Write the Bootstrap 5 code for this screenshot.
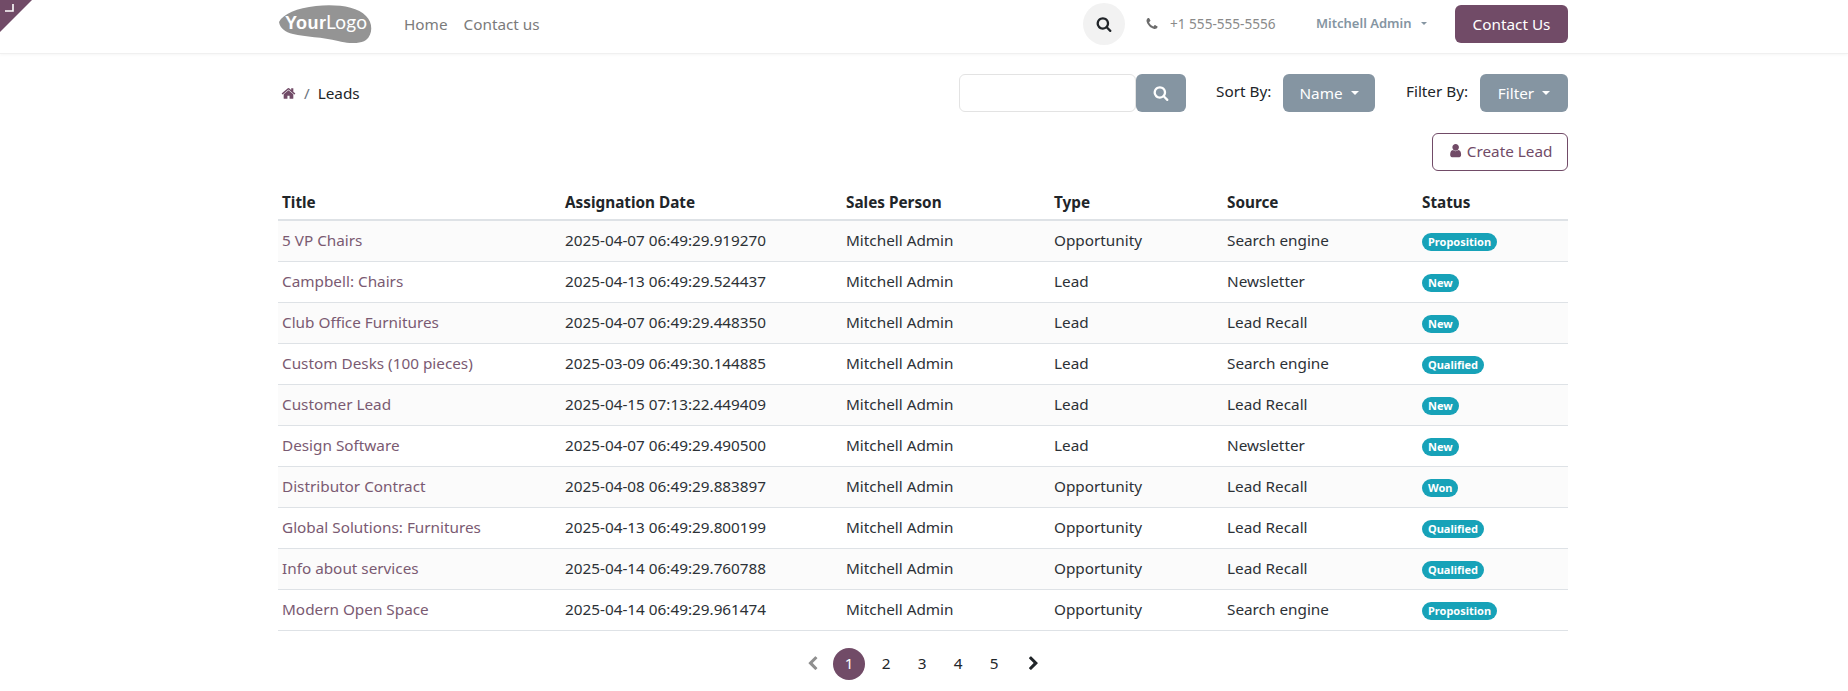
<!DOCTYPE html>
<html lang="en">
<head>
<meta charset="utf-8">
<title>Leads</title>
<link href="https://cdn.jsdelivr.net/npm/bootstrap@5.3.0/dist/css/bootstrap.min.css" rel="stylesheet">
<style>
body{font-family:"Noto Sans","Liberation Sans",sans-serif;font-size:15.3px;color:#212529;background:#fff;overflow:hidden}
.page-wrap{width:1290px;margin-left:278px}
.ic{width:1em;height:1em;fill:currentColor;display:inline-block;vertical-align:-.125em}
.corner-ribbon{position:absolute;left:0;top:0;width:32px;height:32px}
.site-head{height:54px;padding:0 0 5px;border-bottom:1px solid #f0f0f0;box-shadow:0 1px 3px rgba(0,0,0,.04)}
.logo-svg{width:95px;height:40px;display:block;margin-top:-2px}
.head-links{gap:0;margin-left:31px}
.head-links .nav-link{padding:0;color:#7b7b7b;font-size:15.3px;margin-right:16px}
.round-search{width:42px;height:42px;border-radius:50%;background:#f2f2f2;color:#212529;font-size:16px;margin-right:20px}
.head-phone{color:#8a8a8a;font-size:13.6px;width:171px;white-space:nowrap}
.head-phone .ic{color:#6c6c6c;margin-right:11px;font-size:14px}
.head-user{color:#8595a2;font-size:13px;font-weight:600;width:139px;padding:0;white-space:nowrap}
.head-user.dropdown-toggle::after{margin-left:9px}
.btn-contact{background:#714b67;color:#fff;border:0;width:113px;height:38px;font-size:15.3px;padding:0;border-radius:6px}
.btn-contact:hover{background:#714b67;color:#fff}
.tools-row{height:38px;margin-top:20px}
.crumb-list{margin:0 0 0 3px;font-size:15.3px;--bs-breadcrumb-divider-color:#6c757d}
.crumb-list .ic{color:#714b67;font-size:15px;vertical-align:-2px}
.input-group>.search-input{width:177px;height:38px;flex:none;border:1px solid #e3e3e3;border-radius:6px!important}
.btn-slate{background:#8595a2;color:#fff;border:0;height:38px;font-size:15.3px;padding:0;border-radius:6px}
.btn-slate:hover{background:#8595a2;color:#fff}
.btn-slate.dropdown-toggle::after{margin-left:8px}
.input-group>.btn-find{width:50px;margin-left:0!important;font-size:16px;border-radius:6px!important}
.btn-name{width:92px}
.btn-filter{width:88px}
.sort-label{width:67px;margin:0 0 4px 30px;white-space:nowrap}
.filter-label{width:74px;margin:0 0 4px 31px;white-space:nowrap}
.create-row{margin-top:21px}
.btn-create{border:1px solid #714b67;color:#714b67;background:#fff;width:136px;height:38px;padding:0 0 2px;font-size:15.3px;border-radius:6px}
.btn-create:hover{color:#714b67;background:#fff}
.lead-table{table-layout:fixed;width:1290px;margin:10px 0 0;--bs-table-striped-bg:#fbfbfb;--bs-table-border-color:#dee2e6;--bs-table-color:#2c3136;--bs-table-striped-color:#2c3136}
.lead-table th{font-weight:700;height:39px;padding:4px 4px 0;vertical-align:middle;border-bottom:2px solid #dee2e6;white-space:nowrap;color:#212529}
.lead-table td{height:41px;padding:0 4px;vertical-align:middle;white-space:nowrap}
.lead-table a{color:#7a5a72;text-decoration:none}
.lead-table thead tr{height:39px}
.w-a{width:283px}.w-b{width:281px}.w-c{width:208px}.w-d{width:173px}.w-e{width:195px}.w-f{width:150px}
.stat-pill{background:#17a2b8;color:#fff;font-size:11px;font-weight:700;padding:2px 6px;border-radius:9px;display:inline-block;line-height:14px;vertical-align:middle}
.pager{margin:17px 0 0 1px;gap:5px;align-items:center;--bs-pagination-border-width:0}
.pager .page-link{width:32px;height:32px;padding:0;border-radius:50%!important;display:flex;align-items:center;justify-content:center;color:#212529;background:transparent;font-size:15.3px}
.pager .active{margin-right:1px}
.pager .active .page-link{background:#714b67;color:#fff}
.pager .disabled .page-link{color:#8f8f8f;background:transparent}
.pager .pg-next{margin-left:4px}
</style>
</head>
<body>
<svg width="0" height="0" class="d-none" aria-hidden="true">
<symbol id="i-search" viewBox="0 0 1792 1792"><path d="M1216 832q0-185-131.5-316.5t-316.5-131.5-316.5 131.5-131.5 316.5 131.5 316.5 316.5 131.5 316.5-131.5 131.5-316.5zm512 832q0 52-38 90t-90 38q-54 0-90-38l-343-342q-179 124-399 124-143 0-273.5-55.5t-225-150-150-225-55.5-273.5 55.5-273.5 150-225 225-150 273.5-55.5 273.5 55.5 225 150 150 225 55.5 273.5q0 220-124 399l343 343q37 37 37 90z"/></symbol>
<symbol id="i-home" viewBox="0 0 1792 1792"><path d="M1472 992v480q0 26-19 45t-45 19h-384v-384h-256v384h-384q-26 0-45-19t-19-45v-480q0-1 .5-3t.5-3l575-474 575 474q1 2 1 6zm223-69l-62 74q-8 9-21 11h-3q-13 0-21-7l-692-577-692 577q-12 8-24 7-13-2-21-11l-62-74q-8-10-7-23.5t11-21.5l719-599q32-26 76-26t76 26l244 204v-195q0-14 9-23t23-9h192q14 0 23 9t9 23v408l219 182q10 8 11 21.5t-7 23.5z"/></symbol>
<symbol id="i-phone" viewBox="0 0 1792 1792"><path d="M1600 1240q0 27-10 70.5t-21 68.5q-21 50-122 106-94 51-186 51-27 0-53-3.5t-57.5-12.5-47-14.5-55.5-20.5-49-18q-98-35-175-83-127-79-264-216t-216-264q-48-77-83-175-3-9-18-49t-20.5-55.5-14.5-47-12.5-57.5-3.5-53q0-92 51-186 56-101 106-122 25-11 68.5-21t70.5-10q14 0 21 3 18 6 53 76 11 19 30 54t35 63.5 31 53.5q3 4 17.5 25t21.5 35.5 7 28.5q0 20-28.5 50t-62 55-62 53-28.5 46q0 9 5 22.5t8.5 20.5 14 24 11.5 19q76 137 174 235t235 174q2 1 19 11.5t24 14 20.5 8.5 22.5 5q18 0 46-28.5t53-62 55-62 50-28.5q14 0 28.5 7t35.5 21.5 25 17.5q25 15 53.5 31t63.5 35 54 30q70 35 76 53 3 7 3 21z"/></symbol>
<symbol id="i-user" viewBox="0 0 1792 1792"><path d="M1536 1399q0 109-62.5 187t-150.5 78h-854q-88 0-150.5-78t-62.5-187q0-85 8.5-160.5t31.5-152 58.5-131 94-89 134.5-34.5q131 128 313 128t313-128q76 0 134.5 34.5t94 89 58.5 131 31.5 152 8.5 160.5zm-256-887q0 159-112.5 271.5t-271.5 112.5-271.5-112.5-112.5-271.5 112.5-271.5 271.5-112.5 271.5 112.5 112.5 271.5z"/></symbol>
<symbol id="i-left" viewBox="0 0 1792 1792"><path d="M1427 301l-531 531 531 531q19 19 19 45t-19 45l-166 166q-19 19-45 19t-45-19l-742-742q-19-19-19-45t19-45l742-742q19-19 45-19t45 19l166 166q19 19 19 45t-19 45z"/></symbol>
<symbol id="i-right" viewBox="0 0 1792 1792"><path d="M1363 877l-742 742q-19 19-45 19t-45-19l-166-166q-19-19-19-45t19-45l531-531-531-531q-19-19-19-45t19-45l166-166q19-19 45-19t45 19l742 742q19 19 19 45t-19 45z"/></symbol>
</svg>

<svg class="corner-ribbon" viewBox="0 0 32 32" aria-hidden="true"><polygon points="0,0 32,0 0,32" fill="#714b67"/><path d="M13 4V11H5" fill="none" stroke="#fff" stroke-width="1.6"/></svg>

<header class="navbar site-head">
  <div class="page-wrap d-flex align-items-center">
    <a href="#" class="navbar-brand p-0 m-0">
      <svg class="logo-svg" viewBox="0 0 95 40" role="img" aria-label="Your Logo">
        <path d="M1 19C5 11 19 5 38 3C57 1 79 3 88 13C95 20 95 31 88 37C82 41 72 41 60 38C45 34 27 34 15 31C7 29 2 25 1 19Z" fill="#949494"/>
        <text x="7" y="26" font-family="Liberation Sans,sans-serif" font-size="18" font-weight="700" fill="#fff" textLength="41">Your</text>
        <text x="48" y="26" font-family="Lato,sans-serif" font-size="19" fill="#fff" textLength="41">Logo</text>
      </svg>
    </a>
    <nav class="nav head-links">
      <a class="nav-link" href="#">Home</a>
      <a class="nav-link" href="#">Contact us</a>
    </nav>
    <div class="ms-auto d-flex align-items-center">
      <button class="btn round-search d-flex align-items-center justify-content-center p-0" type="button"><svg class="ic"><use href="#i-search"/></svg></button>
      <span class="head-phone"><svg class="ic"><use href="#i-phone"/></svg>+1 555-555-5556</span>
      <button class="btn dropdown-toggle head-user border-0 text-start" type="button">Mitchell Admin</button>
      <a href="#" class="btn btn-contact d-flex align-items-center justify-content-center">Contact Us</a>
    </div>
  </div>
</header>

<main class="page-wrap">
  <div class="d-flex align-items-center tools-row">
    <ol class="breadcrumb crumb-list">
      <li class="breadcrumb-item"><a href="#"><svg class="ic"><use href="#i-home"/></svg></a></li>
      <li class="breadcrumb-item active text-dark">Leads</li>
    </ol>
    <div class="ms-auto d-flex align-items-center">
      <div class="input-group flex-nowrap w-auto">
        <input class="form-control search-input" type="text" aria-label="Search">
        <button class="btn btn-slate btn-find d-flex align-items-center justify-content-center" type="button"><svg class="ic"><use href="#i-search"/></svg></button>
      </div>
      <span class="sort-label">Sort By:</span>
      <button class="btn btn-slate btn-name dropdown-toggle" type="button">Name</button>
      <span class="filter-label">Filter By:</span>
      <button class="btn btn-slate btn-filter dropdown-toggle" type="button">Filter</button>
    </div>
  </div>
  <div class="d-flex justify-content-end create-row">
    <a href="#" class="btn btn-create d-flex align-items-center justify-content-center gap-1"><svg class="ic"><use href="#i-user"/></svg>Create Lead</a>
  </div>

  <table class="table table-striped lead-table">
    <colgroup><col class="w-a"><col class="w-b"><col class="w-c"><col class="w-d"><col class="w-e"><col class="w-f"></colgroup>
    <thead><tr><th>Title</th><th>Assignation Date</th><th>Sales Person</th><th>Type</th><th>Source</th><th>Status</th></tr></thead>
    <tbody>
      <tr><td><a href="#">5 VP Chairs</a></td><td>2025-04-07 06:49:29.919270</td><td>Mitchell Admin</td><td>Opportunity</td><td>Search engine</td><td><span class="stat-pill">Proposition</span></td></tr>
      <tr><td><a href="#">Campbell: Chairs</a></td><td>2025-04-13 06:49:29.524437</td><td>Mitchell Admin</td><td>Lead</td><td>Newsletter</td><td><span class="stat-pill">New</span></td></tr>
      <tr><td><a href="#">Club Office Furnitures</a></td><td>2025-04-07 06:49:29.448350</td><td>Mitchell Admin</td><td>Lead</td><td>Lead Recall</td><td><span class="stat-pill">New</span></td></tr>
      <tr><td><a href="#">Custom Desks (100 pieces)</a></td><td>2025-03-09 06:49:30.144885</td><td>Mitchell Admin</td><td>Lead</td><td>Search engine</td><td><span class="stat-pill">Qualified</span></td></tr>
      <tr><td><a href="#">Customer Lead</a></td><td>2025-04-15 07:13:22.449409</td><td>Mitchell Admin</td><td>Lead</td><td>Lead Recall</td><td><span class="stat-pill">New</span></td></tr>
      <tr><td><a href="#">Design Software</a></td><td>2025-04-07 06:49:29.490500</td><td>Mitchell Admin</td><td>Lead</td><td>Newsletter</td><td><span class="stat-pill">New</span></td></tr>
      <tr><td><a href="#">Distributor Contract</a></td><td>2025-04-08 06:49:29.883897</td><td>Mitchell Admin</td><td>Opportunity</td><td>Lead Recall</td><td><span class="stat-pill">Won</span></td></tr>
      <tr><td><a href="#">Global Solutions: Furnitures</a></td><td>2025-04-13 06:49:29.800199</td><td>Mitchell Admin</td><td>Opportunity</td><td>Lead Recall</td><td><span class="stat-pill">Qualified</span></td></tr>
      <tr><td><a href="#">Info about services</a></td><td>2025-04-14 06:49:29.760788</td><td>Mitchell Admin</td><td>Opportunity</td><td>Lead Recall</td><td><span class="stat-pill">Qualified</span></td></tr>
      <tr><td><a href="#">Modern Open Space</a></td><td>2025-04-14 06:49:29.961474</td><td>Mitchell Admin</td><td>Opportunity</td><td>Search engine</td><td><span class="stat-pill">Proposition</span></td></tr>
    </tbody>
  </table>

  <ul class="pagination justify-content-center pager">
    <li class="page-item disabled"><a class="page-link" href="#"><svg class="ic"><use href="#i-left"/></svg></a></li>
    <li class="page-item active"><a class="page-link" href="#">1</a></li>
    <li class="page-item"><a class="page-link" href="#">2</a></li>
    <li class="page-item"><a class="page-link" href="#">3</a></li>
    <li class="page-item"><a class="page-link" href="#">4</a></li>
    <li class="page-item"><a class="page-link" href="#">5</a></li>
    <li class="page-item pg-next"><a class="page-link" href="#"><svg class="ic"><use href="#i-right"/></svg></a></li>
  </ul>
</main>
</body>
</html>
